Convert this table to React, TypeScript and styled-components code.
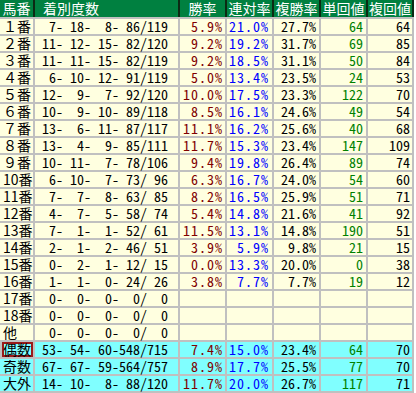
import React from "react";
import styled, { createGlobalStyle, css } from "styled-components";

const Global = createGlobalStyle`
  html, body { margin: 0; padding: 0; background: #ffffff; }
  body { font-family: "Noto Sans CJK JP", "DejaVu Sans", sans-serif; }
`;

const COLS = "33px 143px 45px 45px 45px 45px 44px";

const Wrap = styled.div`
  width: 414px;
  display: flex;
  flex-direction: column;
`;

const HeaderRow = styled.div`
  display: grid;
  grid-template-columns: ${COLS};
  column-gap: 2px;
  height: 17px;
  padding-right: 2px;
  background: #0c2a14;
  border-bottom: 2px solid #c0c0c0;
`;

const HeadCell = styled.div<{ $left?: boolean }>`
  background: #008040;
  color: #ffffff;
  font-family: "Noto Sans CJK JP", sans-serif;
  font-size: 14px;
  line-height: 17px;
  white-space: nowrap;
  text-align: ${(p) => (p.$left ? "left" : "center")};
  padding-left: ${(p) => (p.$left ? "8px" : "0")};
`;

const Body = styled.div`
  display: grid;
  grid-template-columns: ${COLS};
  grid-auto-rows: 15px;
  gap: 2px;
  padding: 0 2px 2px 0;
  background: #c0c0c0;
`;

type Tone = "red" | "blue" | "black" | "green";

const toneColor: Record<Tone, string> = {
  red: "#800000",
  blue: "#0000ff",
  black: "#000000",
  green: "#008000",
};

const Cell = styled.div<{ $cyan?: boolean }>`
  background: ${(p) => (p.$cyan ? "#80ffff" : "#ffffe0")};
  font-family: "Noto Sans CJK JP", sans-serif;
  font-size: 14px;
  line-height: 15px;
  white-space: pre;
`;

const LabelCell = styled(Cell)<{ $boxed?: boolean }>`
  padding-left: 3px;
  ${(p) =>
    p.$boxed &&
    css`
      padding-left: 1px;
      margin-left: 2px;
      box-shadow: inset 0 0 0 2px #9a1a1a;
    `}
`;

const NumCell = styled(Cell)<{ $tone: Tone; $wide?: boolean; $pr?: number }>`
  text-align: right;
  color: ${(p) => toneColor[p.$tone]};
  font-feature-settings: "hwid" 1;
  letter-spacing: ${(p) => (p.$wide ? "1px" : "0")};
  padding-right: ${(p) => p.$pr ?? 2}px;
`;

type Row = {
  label: string;
  rec: string;
  win?: string;
  ren?: string;
  fuku?: string;
  tan?: string;
  fk?: string;
  cyan?: boolean;
  boxed?: boolean;
};

const p2 = (n: number) => String(n).padStart(2, " ");
const p3 = (n: number) => String(n).padStart(3, " ");
const rec = (a: number, b: number, c: number, d: number, n: number) =>
  `${p2(a)}-${p3(b)}-${p3(c)}-${p3(d)}/${p3(n)}`;

const rows: Row[] = [
  { label: "１番", rec: rec(7, 18, 8, 86, 119), win: "5.9%", ren: "21.0%", fuku: "27.7%", tan: "64", fk: "64" },
  { label: "２番", rec: rec(11, 12, 15, 82, 120), win: "9.2%", ren: "19.2%", fuku: "31.7%", tan: "69", fk: "85" },
  { label: "３番", rec: rec(11, 11, 15, 82, 119), win: "9.2%", ren: "18.5%", fuku: "31.1%", tan: "50", fk: "84" },
  { label: "４番", rec: rec(6, 10, 12, 91, 119), win: "5.0%", ren: "13.4%", fuku: "23.5%", tan: "24", fk: "53" },
  { label: "５番", rec: rec(12, 9, 7, 92, 120), win: "10.0%", ren: "17.5%", fuku: "23.3%", tan: "122", fk: "70" },
  { label: "６番", rec: rec(10, 9, 10, 89, 118), win: "8.5%", ren: "16.1%", fuku: "24.6%", tan: "49", fk: "54" },
  { label: "７番", rec: rec(13, 6, 11, 87, 117), win: "11.1%", ren: "16.2%", fuku: "25.6%", tan: "40", fk: "68" },
  { label: "８番", rec: rec(13, 4, 9, 85, 111), win: "11.7%", ren: "15.3%", fuku: "23.4%", tan: "147", fk: "109" },
  { label: "９番", rec: rec(10, 11, 7, 78, 106), win: "9.4%", ren: "19.8%", fuku: "26.4%", tan: "89", fk: "74" },
  { label: "10番", rec: rec(6, 10, 7, 73, 96), win: "6.3%", ren: "16.7%", fuku: "24.0%", tan: "54", fk: "60" },
  { label: "11番", rec: rec(7, 7, 8, 63, 85), win: "8.2%", ren: "16.5%", fuku: "25.9%", tan: "51", fk: "71" },
  { label: "12番", rec: rec(4, 7, 5, 58, 74), win: "5.4%", ren: "14.8%", fuku: "21.6%", tan: "41", fk: "92" },
  { label: "13番", rec: rec(7, 1, 1, 52, 61), win: "11.5%", ren: "13.1%", fuku: "14.8%", tan: "190", fk: "51" },
  { label: "14番", rec: rec(2, 1, 2, 46, 51), win: "3.9%", ren: "5.9%", fuku: "9.8%", tan: "21", fk: "15" },
  { label: "15番", rec: rec(0, 2, 1, 12, 15), win: "0.0%", ren: "13.3%", fuku: "20.0%", tan: "0", fk: "38" },
  { label: "16番", rec: rec(1, 1, 0, 24, 26), win: "3.8%", ren: "7.7%", fuku: "7.7%", tan: "19", fk: "12" },
  { label: "17番", rec: rec(0, 0, 0, 0, 0) },
  { label: "18番", rec: rec(0, 0, 0, 0, 0) },
  { label: "他", rec: rec(0, 0, 0, 0, 0) },
  { label: "偶数", rec: rec(53, 54, 60, 548, 715), win: "7.4%", ren: "15.0%", fuku: "23.4%", tan: "64", fk: "70", cyan: true, boxed: true },
  { label: "奇数", rec: rec(67, 67, 59, 564, 757), win: "8.9%", ren: "17.7%", fuku: "25.5%", tan: "77", fk: "70", cyan: true },
  { label: "大外", rec: rec(14, 10, 8, 88, 120), win: "11.7%", ren: "20.0%", fuku: "26.7%", tan: "117", fk: "71", cyan: true },
];

export default function App() {
  return (
    <>
      <Global />
      <Wrap>
        <HeaderRow>
          <HeadCell>馬番</HeadCell>
          <HeadCell $left>着別度数</HeadCell>
          <HeadCell>勝率</HeadCell>
          <HeadCell>連対率</HeadCell>
          <HeadCell>複勝率</HeadCell>
          <HeadCell>単回値</HeadCell>
          <HeadCell>複回値</HeadCell>
        </HeaderRow>
        <Body>
          {rows.map((r) => (
            <React.Fragment key={r.label}>
              <LabelCell $cyan={r.cyan} $boxed={r.boxed}>{r.label}</LabelCell>
              <NumCell $cyan={r.cyan} $tone="black" $pr={10}>{r.rec}</NumCell>
              <NumCell $cyan={r.cyan} $tone="red" $wide>{r.win ?? ""}</NumCell>
              <NumCell $cyan={r.cyan} $tone="blue" $wide $pr={3}>{r.ren ?? ""}</NumCell>
              <NumCell $cyan={r.cyan} $tone="black" $pr={3}>{r.fuku ?? ""}</NumCell>
              <NumCell $cyan={r.cyan} $tone="green" $pr={3}>{r.tan ?? ""}</NumCell>
              <NumCell $cyan={r.cyan} $tone="black" $pr={2}>{r.fk ?? ""}</NumCell>
            </React.Fragment>
          ))}
        </Body>
      </Wrap>
    </>
  );
}
